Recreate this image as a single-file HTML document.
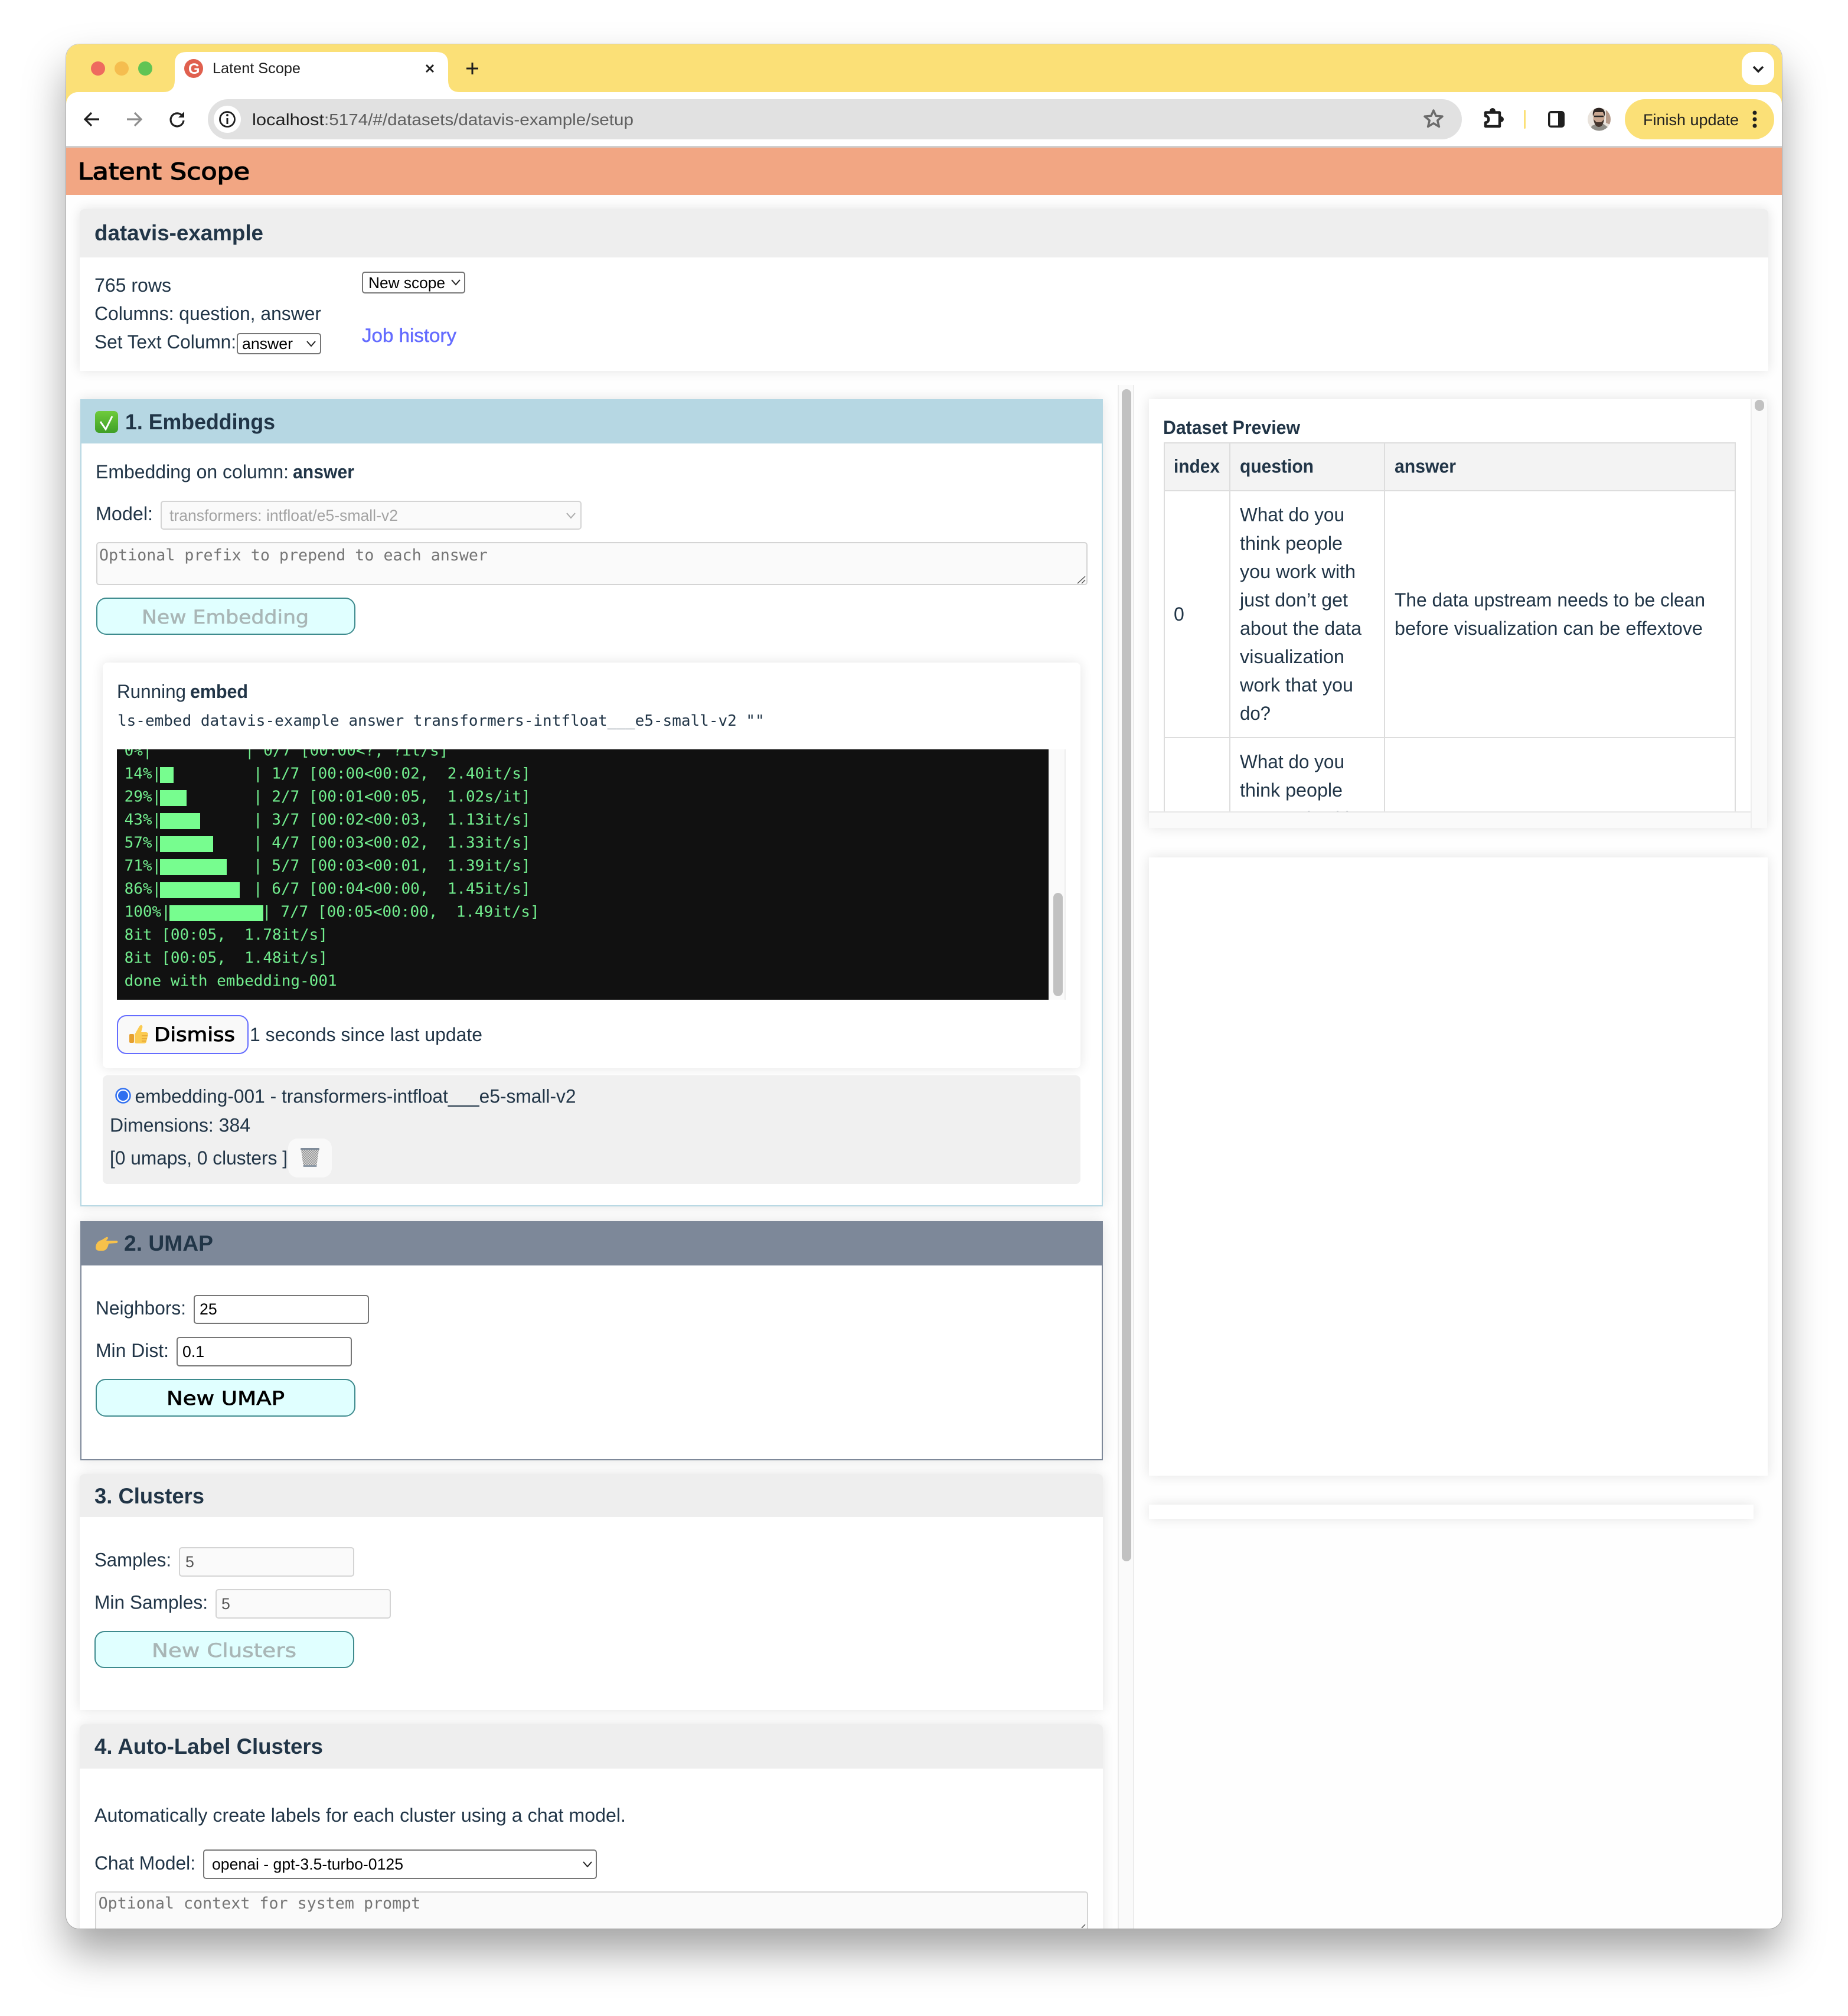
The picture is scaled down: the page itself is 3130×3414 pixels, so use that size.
<!DOCTYPE html>
<html lang="en"><head><meta charset="utf-8"><title>Latent Scope</title>
<style>
html,body{margin:0;padding:0;width:3130px;height:3414px;overflow:hidden;background:#fff}
.b{position:absolute;box-sizing:border-box}
.card{background:#fff;box-shadow:0 0 20px rgba(0,0,0,.11)}
.hd{background:#eee}
.ctl{border:2px solid #767676;border-radius:5px;background:#fff}
.dis{border:2px solid #d4d4d4;border-radius:5px;background:#fafafa}
.btn{background:#e0ffff;border:2px solid #3d8a8d;border-radius:17px}
svg{position:absolute;left:0;top:0}
svg text{white-space:pre;font-family:"Liberation Sans",Arial,sans-serif;font-size:32px;fill:#213547}
svg text.h{font-weight:700;font-size:37px}
svg text.s{font-weight:700}
svg text.c{font-size:26.67px;fill:#000}
svg text.m{font-family:"DejaVu Sans Mono","Liberation Mono",monospace;font-size:26px}
svg text.t{fill:#72ee8e}
svg text.f{font-family:"DejaVu Sans","Liberation Sans",sans-serif}
</style></head><body>
<div class="b" style="left:112px;top:75px;width:2906px;height:3191px;border-radius:22px;box-shadow:0 40px 70px rgba(0,0,0,.36),0 0 0 1px rgba(0,0,0,.2)"></div>
<div class="b" style="left:0;top:0;width:3130px;height:3414px;clip-path:inset(75px 112px 148px 112px round 22px)">
<div class="b" style="left:112px;top:75px;width:2906px;height:3191px;background:#fefefe"></div>
<div class="b" style="left:112px;top:75px;width:2906px;height:110px;background:#fbe077"></div>
<div class="b" style="left:112px;top:156px;width:2906px;height:92px;background:#fff;border-radius:20px 20px 0 0"></div>
<div class="b" style="left:112px;top:247px;width:2906px;height:3px;background:#cfcfcf"></div>
<div class="b" style="left:352px;top:168px;width:2124px;height:68px;background:#e1e1e1;border-radius:34px"></div>
<div class="b" style="left:362px;top:179px;width:46px;height:46px;background:#fff;border-radius:23px"></div>
<div class="b" style="left:2752px;top:168px;width:253px;height:68px;background:#fbe077;border-radius:34px"></div>
<div class="b" style="left:2950px;top:88px;width:55px;height:56px;background:#fff;border-radius:20px"></div>
<div class="b" style="left:112px;top:250px;width:2906px;height:80px;background:#f2a683"></div>

<div class="b card" style="left:135px;top:354px;width:2860px;height:274px;border-radius:8px 8px 0 0"></div>
<div class="b hd" style="left:135px;top:354px;width:2860px;height:82px;border-radius:8px 8px 0 0"></div>
<div class="b ctl" style="left:613px;top:460px;width:175px;height:37px"></div>
<div class="b ctl" style="left:401px;top:564px;width:143px;height:36px"></div>

<div class="b card" style="left:136px;top:676px;width:1732px;height:1367px;border:2px solid #b6d7e3"></div>
<div class="b" style="left:136px;top:676px;width:1732px;height:75px;background:#b6d7e3"></div>
<div class="b dis" style="left:272px;top:848px;width:713px;height:49px"></div>
<div class="b dis" style="left:163px;top:918px;width:1679px;height:73px"></div>
<div class="b btn" style="left:163px;top:1012px;width:439px;height:63px"></div>
<div class="b card" style="left:174px;top:1122px;width:1656px;height:687px;border-radius:8px"></div>
<div class="b" style="left:198px;top:1269px;width:1578px;height:424px;background:#111"></div>
<div class="b" style="left:1776px;top:1269px;width:29px;height:424px;background:#fafafa;border-right:2px solid #eee"></div>
<div class="b" style="left:1784px;top:1512px;width:16px;height:175px;background:#c1c1c1;border-radius:8px"></div>
<div class="b" style="left:198px;top:1719px;width:223px;height:66px;background:#f9f9f9;border:2.5px solid #646cff;border-radius:16px"></div>
<div class="b" style="left:174px;top:1821px;width:1656px;height:184px;background:#f0f0f0;border-radius:8px"></div>
<div class="b" style="left:488px;top:1928px;width:74px;height:66px;background:#f9f9f9;border-radius:16px"></div>

<div class="b card" style="left:136px;top:2068px;width:1732px;height:405px;border:2px solid #7d8899"></div>
<div class="b" style="left:136px;top:2068px;width:1732px;height:75px;background:#7d8899"></div>
<div class="b ctl" style="left:328px;top:2193px;width:297px;height:49px"></div>
<div class="b ctl" style="left:299px;top:2264px;width:297px;height:50px"></div>
<div class="b btn" style="left:162px;top:2335px;width:440px;height:64px"></div>

<div class="b card" style="left:135px;top:2496px;width:1733px;height:400px;border-radius:8px 8px 0 0"></div>
<div class="b hd" style="left:135px;top:2496px;width:1733px;height:73px;border-radius:8px 8px 0 0"></div>
<div class="b dis" style="left:303px;top:2620px;width:297px;height:50px"></div>
<div class="b dis" style="left:365px;top:2691px;width:297px;height:50px"></div>
<div class="b btn" style="left:160px;top:2762px;width:440px;height:63px"></div>

<div class="b card" style="left:135px;top:2920px;width:1733px;height:400px;border-radius:8px 8px 0 0"></div>
<div class="b hd" style="left:135px;top:2920px;width:1733px;height:75px;border-radius:8px 8px 0 0"></div>
<div class="b ctl" style="left:344px;top:3132px;width:667px;height:50px"></div>
<div class="b dis" style="left:161px;top:3203px;width:1682px;height:90px"></div>

<div class="b" style="left:1893px;top:652px;width:28px;height:2620px;background:#fafafa;border-left:2px solid #ececec;border-right:2px solid #ececec"></div>
<div class="b" style="left:1900px;top:659px;width:16px;height:1985px;background:#c1c1c1;border-radius:8px"></div>

<div class="b card" style="left:1946px;top:676px;width:1047px;height:726px"></div>
<div class="b" style="left:1946px;top:1374px;width:1047px;height:28px;background:#fafafa;border-top:2px solid #e6e6e6"></div>
<div class="b" style="left:2965px;top:676px;width:28px;height:726px;background:#fafafa;border-left:2px solid #eee"></div>
<div class="b" style="left:2972px;top:677px;width:16px;height:19px;background:#c1c1c1;border-radius:8px"></div>
<div class="b" style="left:1971px;top:749px;width:969px;height:625px;border:2px solid #ddd;border-bottom:0"></div>
<div class="b" style="left:1973px;top:751px;width:965px;height:81px;background:#f3f3f3;border-bottom:2px solid #ddd"></div>
<div class="b" style="left:2082px;top:751px;width:2px;height:623px;background:#ddd"></div>
<div class="b" style="left:2344px;top:751px;width:2px;height:623px;background:#ddd"></div>
<div class="b" style="left:1973px;top:1248px;width:965px;height:2px;background:#ddd"></div>

<div class="b card" style="left:1946px;top:1452px;width:1048px;height:1047px"></div>
<div class="b card" style="left:1946px;top:2548px;width:1024px;height:24px"></div>

<svg width="3130" height="3414" viewBox="0 0 3130 3414" xmlns="http://www.w3.org/2000/svg">
<defs>
<clipPath id="term"><rect x="198" y="1269" width="1578" height="424"/></clipPath>
<clipPath id="prev"><rect x="1946" y="676" width="1019" height="698"/></clipPath>
<clipPath id="av"><circle cx="2708.5" cy="202" r="19.5"/></clipPath>
<linearGradient id="gr" x1="0" y1="0" x2="0" y2="1"><stop offset="0" stop-color="#6fcb3c"/><stop offset="1" stop-color="#3f9f26"/></linearGradient>
<pattern id="mesh" width="4" height="4" patternUnits="userSpaceOnUse"><rect width="4" height="4" fill="#e6e6e6"/><path d="M0 0L4 4M4 0L0 4" stroke="#8c8c8c" stroke-width=".9"/></pattern>
</defs>
<!-- browser chrome -->
<circle cx="166" cy="116" r="12" fill="#ee6a5f"/><circle cx="206" cy="116" r="12" fill="#f5bd4f"/><circle cx="246" cy="116" r="12" fill="#61c454"/>
<path d="M296 108Q296 88 316 88H739Q759 88 759 108V136Q759 156 779 156H276Q296 156 296 136Z" fill="#fff"/>
<circle cx="328" cy="116" r="16" fill="#e0604f"/>
<text x="319" y="125" style="font-size:25px;font-weight:700;fill:#fff">G</text>
<text x="360" y="124" textLength="149" lengthAdjust="spacingAndGlyphs" style="font-size:25px;fill:#1f1f1f">Latent Scope</text>
<path d="M722 110L734 122M734 110L722 122" stroke="#1f1f1f" stroke-width="3" fill="none"/>
<path d="M790 116H810M800 106V126" stroke="#1f1f1f" stroke-width="3" fill="none"/>
<path d="M2970 113L2978 121L2986 113" stroke="#1f1f1f" stroke-width="3.5" fill="none"/>
<path d="M168 202H146M155 191L144 202L155 213" stroke="#1f1f1f" stroke-width="3.2" fill="none"/>
<path d="M215 202H238M228 191L239 202L228 213" stroke="#8e8e8e" stroke-width="3.2" fill="none"/>
<path d="M309 196.5A11 11 0 1 0 311 204" stroke="#1f1f1f" stroke-width="3.2" fill="none"/><path d="M312 189V199H302Z" fill="#1f1f1f"/>
<circle cx="385" cy="202" r="12.5" fill="none" stroke="#1f1f1f" stroke-width="2.8"/><path d="M385 200V210" stroke="#1f1f1f" stroke-width="3"/><circle cx="385" cy="195" r="1.9" fill="#1f1f1f"/>
<text x="427" y="212" textLength="122" lengthAdjust="spacingAndGlyphs" style="font-size:28px;fill:#1f1f1f">localhost</text>
<text x="549" y="212" textLength="524" lengthAdjust="spacingAndGlyphs" style="font-size:28px;fill:#5f5f5f">:5174/#/datasets/datavis-example/setup</text>
<path d="M2428 187L2432.1 196.3L2443 197.1L2434.7 204L2437.4 214.5L2428 208.8L2418.6 214.5L2421.3 204L2413 197.1L2423.9 196.3Z" fill="none" stroke="#6b6b6b" stroke-width="3.5" stroke-linejoin="round"/>
<circle cx="2528" cy="188" r="5" fill="#1f1f1f"/><circle cx="2542" cy="202" r="5" fill="#1f1f1f"/>
<path d="M2516 190.5H2540V214H2516V207.5C2523 207.5 2523 196.5 2516 196.5Z" fill="#fff" stroke="#1f1f1f" stroke-width="4.4" stroke-linejoin="round"/>
<rect x="2581" y="186" width="3" height="32" rx="1.5" fill="#fbe077"/>
<rect x="2622" y="188" width="28" height="28" rx="5" fill="#1f1f1f"/><rect x="2625.5" y="191.5" width="13.5" height="21" fill="#fff"/>
<g clip-path="url(#av)"><rect x="2688" y="182" width="42" height="42" fill="#e9e3dc"/><path d="M2720 186L2729 192V212L2720 208Z" fill="#b59a8a"/><path d="M2692 224L2696 213L2704 210H2716L2724 216V224Z" fill="#8f8e88"/><ellipse cx="2708" cy="199" rx="9.5" ry="13" fill="#c9a690"/><path d="M2698 197Q2696 183 2708 182.5Q2720 183 2718 197L2715 190H2701Z" fill="#2e2522"/><path d="M2699 202Q2701 215 2708 215Q2715 215 2717 202L2712 207H2704Z" fill="#43342c"/><path d="M2700 197H2716" stroke="#222" stroke-width="2.4"/></g>
<text x="2783" y="212" textLength="162" lengthAdjust="spacingAndGlyphs" style="font-size:27px;fill:#1f1f1f">Finish update</text>
<circle cx="2972" cy="191" r="3.5" fill="#1f1f1f"/><circle cx="2972" cy="202" r="3.5" fill="#1f1f1f"/><circle cx="2972" cy="213" r="3.5" fill="#1f1f1f"/>
<!-- header -->
<text class="f" x="132" y="304" textLength="291" lengthAdjust="spacingAndGlyphs" style="font-size:39px;fill:#000;stroke:#000;stroke-width:1.3px">Latent Scope</text>
<!-- dataset card -->
<text class="h" x="160" y="407" textLength="286" lengthAdjust="spacingAndGlyphs">datavis-example</text>
<text x="160" y="494" textLength="130" lengthAdjust="spacingAndGlyphs">765 rows</text>
<text x="160" y="542" textLength="384" lengthAdjust="spacingAndGlyphs">Columns: question, answer</text>
<text x="160" y="590" textLength="240" lengthAdjust="spacingAndGlyphs">Set Text Column:</text>
<text class="c" x="410" y="591" textLength="86" lengthAdjust="spacingAndGlyphs">answer</text>
<path d="M520 578L527 586L534 578" stroke="#222" stroke-width="2" fill="none"/>
<text class="c" x="624" y="488" textLength="130" lengthAdjust="spacingAndGlyphs">New scope</text>
<path d="M765 474L772 482L779 474" stroke="#222" stroke-width="2" fill="none"/>
<text x="613" y="579" textLength="160" lengthAdjust="spacingAndGlyphs" style="fill:#646cff;stroke:#646cff;stroke-width:.5px">Job history</text>
<!-- section 1 -->
<rect x="161" y="696" width="39" height="37" rx="7" fill="url(#gr)"/>
<path d="M170 714L179 727L190 705" stroke="#fff" stroke-width="3" fill="none"/>
<text class="h" x="212" y="727" textLength="254" lengthAdjust="spacingAndGlyphs">1. Embeddings</text>
<text x="162" y="810" textLength="327" lengthAdjust="spacingAndGlyphs">Embedding on column:</text>
<text class="s" x="496" y="810" textLength="104" lengthAdjust="spacingAndGlyphs">answer</text>
<text x="162" y="881" textLength="97" lengthAdjust="spacingAndGlyphs">Model:</text>
<text class="c" x="287" y="882" textLength="387" lengthAdjust="spacingAndGlyphs" style="fill:#a3a3a3">transformers: intfloat/e5-small-v2</text>
<path d="M960 869L967 877L974 869" stroke="#aaa" stroke-width="2" fill="none"/>
<text class="m" x="168" y="949" style="fill:#757575;font-size:26.67px">Optional prefix to prepend to each answer</text>
<path d="M1825 988L1838 976M1832 988L1838 982" stroke="#555" stroke-width="1.5" fill="none"/>
<text class="f" x="240" y="1056" textLength="283" lengthAdjust="spacingAndGlyphs" style="fill:#a9b6b6;stroke:#a9b6b6;stroke-width:.6px">New Embedding</text>
<text x="198" y="1182" textLength="117" lengthAdjust="spacingAndGlyphs">Running</text>
<text class="s" x="322" y="1182" textLength="98" lengthAdjust="spacingAndGlyphs">embed</text>
<text class="m" x="199" y="1229">ls-embed datavis-example answer transformers-intfloat___e5-small-v2 ""</text>
<g clip-path="url(#term)">
<g fill="#77fd8f"><rect x="271" y="1299" width="23" height="27"/><rect x="271" y="1338" width="45" height="27"/><rect x="271" y="1377" width="68" height="27"/><rect x="271" y="1416" width="90" height="27"/><rect x="271" y="1455" width="113" height="27"/><rect x="271" y="1494" width="135" height="27"/><rect x="287" y="1533" width="159" height="27"/></g>
<g transform="translate(0,-1.5)">
<text class="m t" x="210.6" y="1281">0%|</text><text class="m t" x="415" y="1281">| 0/7 [00:00&lt;?, ?it/s]</text>
<text class="m t" x="210.6" y="1320">14%|</text><text class="m t" x="429" y="1320">| 1/7 [00:00&lt;00:02,  2.40it/s]</text>
<text class="m t" x="210.6" y="1359">29%|</text><text class="m t" x="429" y="1359">| 2/7 [00:01&lt;00:05,  1.02s/it]</text>
<text class="m t" x="210.6" y="1398">43%|</text><text class="m t" x="429" y="1398">| 3/7 [00:02&lt;00:03,  1.13it/s]</text>
<text class="m t" x="210.6" y="1437">57%|</text><text class="m t" x="429" y="1437">| 4/7 [00:03&lt;00:02,  1.33it/s]</text>
<text class="m t" x="210.6" y="1476">71%|</text><text class="m t" x="429" y="1476">| 5/7 [00:03&lt;00:01,  1.39it/s]</text>
<text class="m t" x="210.6" y="1515">86%|</text><text class="m t" x="429" y="1515">| 6/7 [00:04&lt;00:00,  1.45it/s]</text>
<text class="m t" x="210.6" y="1554">100%|</text><text class="m t" x="444" y="1554">| 7/7 [00:05&lt;00:00,  1.49it/s]</text>
<text class="m t" x="210.6" y="1593">8it [00:05,  1.78it/s]</text>
<text class="m t" x="210.6" y="1632">8it [00:05,  1.48it/s]</text>
<text class="m t" x="210.6" y="1671">done with embedding-001</text>
</g></g>
<path d="M228 1752L236 1738Q240 1733 241.5 1739L239 1748H248Q252 1749 250.5 1753L248 1764Q247 1767 244 1767H231Q228 1767 228 1763Z" fill="#fbcb52"/><path d="M240 1754H250M240 1759H249M240 1763H247" stroke="#e3a233" stroke-width="1.4"/><rect x="219" y="1751" width="8" height="15" rx="2" fill="#e6a02f"/>
<text class="f" x="261" y="1763" textLength="137" lengthAdjust="spacingAndGlyphs" style="fill:#000;stroke:#000;stroke-width:.9px">Dismiss</text>
<text x="423" y="1763" textLength="394" lengthAdjust="spacingAndGlyphs">1 seconds since last update</text>
<circle cx="208.5" cy="1855.5" r="12" fill="#fff" stroke="#2f6ff0" stroke-width="2.5"/><circle cx="208.5" cy="1855.5" r="8.5" fill="#2f6ff0"/>
<text x="228.5" y="1867.5" textLength="747" lengthAdjust="spacingAndGlyphs">embedding-001 - transformers-intfloat___e5-small-v2</text>
<text x="186" y="1916.5" textLength="238" lengthAdjust="spacingAndGlyphs">Dimensions: 384</text>
<text x="186" y="1972" textLength="301" lengthAdjust="spacingAndGlyphs">[0 umaps, 0 clusters ]</text>
<path d="M510 1947H540L536 1976H514Z" fill="url(#mesh)"/><rect x="509" y="1944" width="32" height="3.5" rx="1.5" fill="#7f8b99"/><rect x="513.5" y="1973" width="23" height="3" rx="1" fill="#8d99a6"/>
<!-- section 2 -->
<path d="M162 2112Q163 2102 172 2100L180 2095Q183 2094 183 2097L180 2101H198Q201 2103 198 2105L184 2106Q182 2117 175 2118H168Q162 2118 162 2112Z" fill="#f7c14b"/>
<text class="h" x="210" y="2118" textLength="151" lengthAdjust="spacingAndGlyphs">2. UMAP</text>
<text x="162" y="2226" textLength="153" lengthAdjust="spacingAndGlyphs">Neighbors:</text>
<text class="c" x="338" y="2226">25</text>
<text x="162" y="2298" textLength="124" lengthAdjust="spacingAndGlyphs">Min Dist:</text>
<text class="c" x="309" y="2298">0.1</text>
<text class="f" x="282" y="2379" textLength="200" lengthAdjust="spacingAndGlyphs" style="fill:#000;stroke:#000;stroke-width:.7px">New UMAP</text>
<!-- section 3 -->
<text class="h" x="160" y="2546" textLength="186" lengthAdjust="spacingAndGlyphs">3. Clusters</text>
<text x="160" y="2652.5" textLength="130" lengthAdjust="spacingAndGlyphs">Samples:</text>
<text class="c" x="314" y="2654" style="fill:#555">5</text>
<text x="160" y="2724.5" textLength="192" lengthAdjust="spacingAndGlyphs">Min Samples:</text>
<text class="c" x="375" y="2725" style="fill:#555">5</text>
<text class="f" x="257" y="2806" textLength="245" lengthAdjust="spacingAndGlyphs" style="fill:#a9b6b6;stroke:#a9b6b6;stroke-width:.6px">New Clusters</text>
<!-- section 4 -->
<text class="h" x="160" y="2970" textLength="387" lengthAdjust="spacingAndGlyphs">4. Auto-Label Clusters</text>
<text x="160" y="3085" textLength="900" lengthAdjust="spacingAndGlyphs">Automatically create labels for each cluster using a chat model.</text>
<text x="160" y="3166" textLength="171" lengthAdjust="spacingAndGlyphs">Chat Model:</text>
<text class="c" x="359" y="3166" textLength="324" lengthAdjust="spacingAndGlyphs">openai - gpt-3.5-turbo-0125</text>
<path d="M988 3153L995 3161L1002 3153" stroke="#222" stroke-width="2" fill="none"/>
<text class="m" x="166.6" y="3232" style="fill:#757575;font-size:26.67px">Optional context for system prompt</text>
<path d="M1832 3265L1838 3259" stroke="#555" stroke-width="1.5" fill="none"/>
<!-- preview -->
<text class="s" x="1970" y="735" textLength="232" lengthAdjust="spacingAndGlyphs">Dataset Preview</text>
<g clip-path="url(#prev)">
<text class="s" x="1988" y="800.5" textLength="78" lengthAdjust="spacingAndGlyphs">index</text>
<text class="s" x="2100" y="800.5" textLength="125" lengthAdjust="spacingAndGlyphs">question</text>
<text class="s" x="2362" y="800.5" textLength="104" lengthAdjust="spacingAndGlyphs">answer</text>
<text x="1988" y="1051">0</text>
<text x="2100" y="882.5" textLength="177" lengthAdjust="spacingAndGlyphs">What do you</text>
<text x="2100" y="931" textLength="174" lengthAdjust="spacingAndGlyphs">think people</text>
<text x="2100" y="979" textLength="196" lengthAdjust="spacingAndGlyphs">you work with</text>
<text x="2100" y="1027" textLength="183" lengthAdjust="spacingAndGlyphs">just don’t get</text>
<text x="2100" y="1075" textLength="206" lengthAdjust="spacingAndGlyphs">about the data</text>
<text x="2100" y="1123" textLength="177" lengthAdjust="spacingAndGlyphs">visualization</text>
<text x="2100" y="1171" textLength="192" lengthAdjust="spacingAndGlyphs">work that you</text>
<text x="2100" y="1219" textLength="52" lengthAdjust="spacingAndGlyphs">do?</text>
<text x="2362" y="1027" textLength="526" lengthAdjust="spacingAndGlyphs">The data upstream needs to be clean</text>
<text x="2362" y="1075" textLength="522" lengthAdjust="spacingAndGlyphs">before visualization can be effextove</text>
<text x="2100" y="1301" textLength="177" lengthAdjust="spacingAndGlyphs">What do you</text>
<text x="2100" y="1349" textLength="174" lengthAdjust="spacingAndGlyphs">think people</text>
<text x="2100" y="1397" textLength="196" lengthAdjust="spacingAndGlyphs">you work with</text>
</g>
</svg>
</div>
</body></html>
